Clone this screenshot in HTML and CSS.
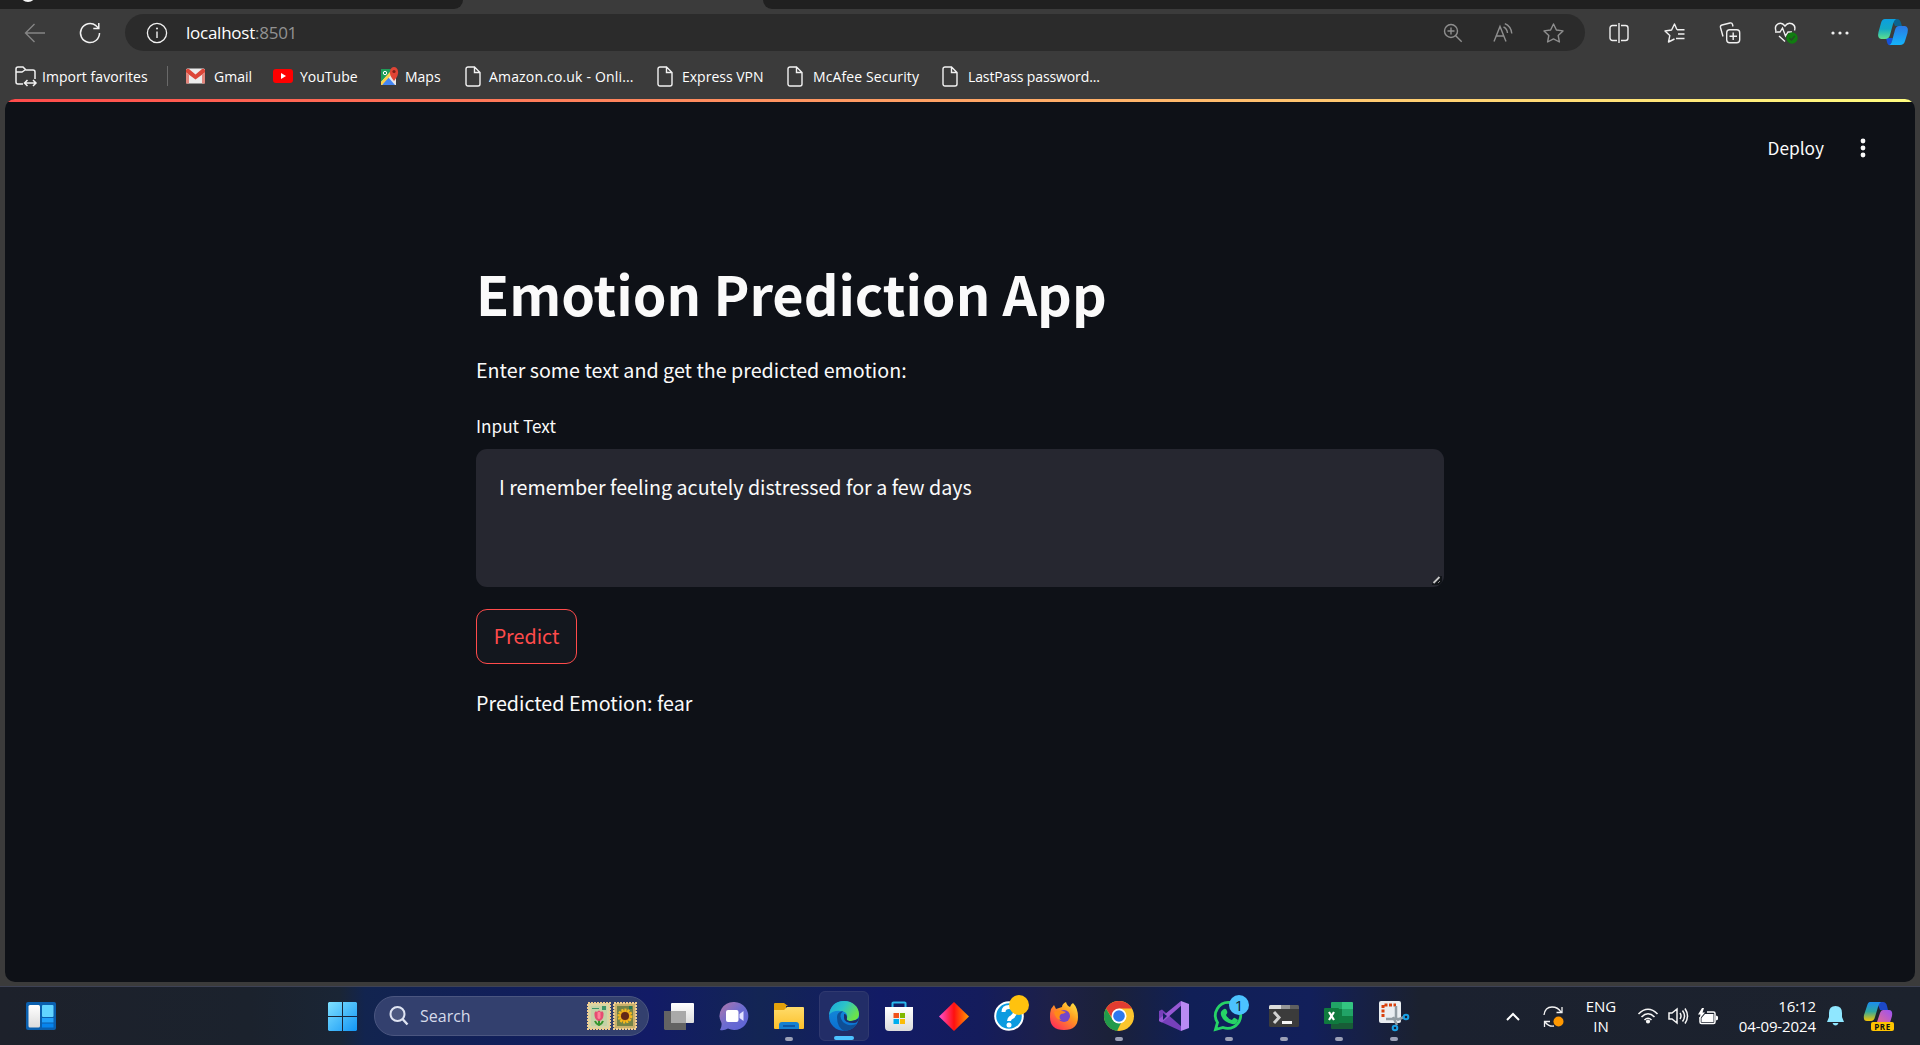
FILE: index.html
```html
<!DOCTYPE html>
<html lang="en">
<head>
<meta charset="utf-8">
<title>Emotion Prediction App</title>
<link rel="stylesheet" href="styles.css">
</head>
<body>
<svg class="defs" width="0" height="0">
  <defs>
    <linearGradient id="win" x1="0" y1="0" x2="1" y2="1"><stop offset="0" stop-color="#7fe0ff"/><stop offset="1" stop-color="#1296f5"/></linearGradient>
    <linearGradient id="edgeTop" x1="0" y1="0" x2="1" y2=".5"><stop offset="0" stop-color="#1aa5dc"/><stop offset=".5" stop-color="#2cc3c9"/><stop offset="1" stop-color="#6ae34a"/></linearGradient>
    <linearGradient id="edgeLow" x1="0" y1="0" x2="0" y2="1"><stop offset="0" stop-color="#1590dc"/><stop offset="1" stop-color="#0b6ed0"/></linearGradient>
    <linearGradient id="chat" x1="0" y1="0" x2="1" y2="1"><stop offset="0" stop-color="#b377a8"/><stop offset=".5" stop-color="#6c6cd0"/><stop offset="1" stop-color="#5a62d8"/></linearGradient>
    <linearGradient id="folder" x1="0" y1="0" x2="0" y2="1"><stop offset="0" stop-color="#ffdc6b"/><stop offset="1" stop-color="#fcc02a"/></linearGradient>
    <linearGradient id="gem" x1="0" y1="0" x2="1" y2="0"><stop offset="0" stop-color="#ff4fd0"/><stop offset=".5" stop-color="#ff1010"/><stop offset="1" stop-color="#ff9c00"/></linearGradient>
    <linearGradient id="fox" x1="1" y1="0" x2=".2" y2="1"><stop offset="0" stop-color="#fff04a"/><stop offset=".45" stop-color="#ff9a1f"/><stop offset="1" stop-color="#ff2a5a"/></linearGradient>
    <linearGradient id="copA" x1="0" y1="0" x2="0" y2="1"><stop offset="0" stop-color="#0c9fe0"/><stop offset=".5" stop-color="#13a9c5"/><stop offset="1" stop-color="#5ee08c"/></linearGradient>
    <linearGradient id="copB" x1="0" y1="0" x2="0" y2="1"><stop offset="0" stop-color="#2b78e4"/><stop offset="1" stop-color="#14b4fa"/></linearGradient>
    <linearGradient id="preA" x1="0" y1="0" x2="0" y2="1"><stop offset="0" stop-color="#1b8cf0"/><stop offset=".5" stop-color="#2fa7a0"/><stop offset="1" stop-color="#f5c400"/></linearGradient>
    <linearGradient id="preB" x1="1" y1="0" x2="0" y2="1"><stop offset="0" stop-color="#9a52f5"/><stop offset="1" stop-color="#f5707c"/></linearGradient>
    <linearGradient id="sheet" x1="0" y1="0" x2="0" y2="1"><stop offset="0" stop-color="#fff"/><stop offset="1" stop-color="#dcdcdc"/></linearGradient>
    <symbol id="page" viewBox="0 0 16 21"><path d="M3 1h6.500L15 6.500V18a2 2 0 0 1-2 2H3a2 2 0 0 1-2-2V3a2 2 0 0 1 2-2zM9.500 1v5.500H15" fill="none" stroke="#f2f2f2" stroke-width="1.400"/></symbol>
  </defs>
</svg>

<header class="browser">
  <div class="tabstrip">
    <div class="tabs-before"><span class="favicon"></span></div>
    <div class="tabs-after"></div>
  </div>
  <nav class="toolbar">
    <svg class="back" width="22" height="20" viewBox="0 0 22 20"><path d="M21 10H1.500M10.500 1 1.500 10l9 9" fill="none" stroke="#858585" stroke-width="1.400"/></svg>
    <svg class="reload" width="22" height="22" viewBox="0 0 22 22"><path d="M20.500 11A9.500 9.500 0 1 1 17 3.700L19.500 6M19.800 1v5.500h-5.500" fill="none" stroke="#f2f2f2" stroke-width="1.500"/></svg>
    <div class="address">
      <svg width="22" height="22" viewBox="0 0 22 22"><circle cx="11" cy="11" r="9.600" fill="none" stroke="#f2f2f2" stroke-width="1.300"/><path d="M11 9.500V16" stroke="#f2f2f2" stroke-width="1.400"/><circle cx="11" cy="6.500" r="1" fill="#f2f2f2"/></svg>
      <span class="url">localhost<span class="port">:8501</span></span>
      <div class="address-actions">
        <svg width="20" height="20" viewBox="0 0 20 20" fill="none" stroke="#8f8f8f" stroke-width="1.400"><circle cx="8" cy="8" r="6.500"/><path d="m12.700 12.700 6 6M8 4.500v7M4.500 8h7"/></svg>
        <svg width="20" height="20" viewBox="0 0 20 20" fill="none" stroke="#8f8f8f" stroke-width="1.400"><path d="m1 18.500 6-15 6 15M3.200 13h7.600M10.500 4q3.500 1.500 4 6M11.800.700Q18 3 18.800 10.500"/></svg>
        <svg width="21" height="20" viewBox="0 0 21 20"><path d="m10.500 1 2.900 6 6.600.900-4.800 4.600 1.200 6.500-5.900-3.100-5.900 3.100 1.200-6.500L1 7.900 7.600 7z" fill="none" stroke="#8f8f8f" stroke-width="1.400" stroke-linejoin="round"/></svg>
      </div>
    </div>
    <div class="tools">
      <svg width="20" height="20" viewBox="0 0 20 20" fill="none" stroke="#f0f0f0" stroke-width="1.400"><path d="M8 2.500H3.500a2.500 2.500 0 0 0-2.500 2.500v10a2.500 2.500 0 0 0 2.500 2.500H8M12 2.500h4.500A2.500 2.500 0 0 1 19 5v10a2.500 2.500 0 0 1-2.500 2.500H12M10 0v20"/></svg>
      <svg width="21" height="20" viewBox="0 0 21 20" fill="none" stroke="#f0f0f0" stroke-width="1.400" stroke-linejoin="round"><path d="M13 6.800 10.500 1 7.600 7 1 8l4.800 4.600L4.500 19l6-3M13 6.800h7.500M14 11h6.500M12 15.500h8.500"/></svg>
      <svg width="22" height="22" viewBox="0 0 22 22" fill="none" stroke="#f0f0f0" stroke-width="1.400"><rect x="7.700" y="7.700" width="13" height="13" rx="3"/><path d="M14.200 10.500v7.500M10.500 14.200H18M4 14.500 1.500 5.500Q1 3.500 3 3l8-2q2-.500 2.500 1.500l.500 2"/></svg>
      <svg width="24" height="22" viewBox="0 0 24 22" fill="none" stroke="#f0f0f0" stroke-width="1.400"><path d="M2 9C-.500 2 7-1.500 11 4c4-5.500 11.500-2 9.500 4.500M1 10h5l2.500-4 3 8 2.500-4h4M5 14l6 5.500"/><circle cx="18" cy="16" r="5.700" fill="#107c10" stroke="none"/><path d="m15.500 16 2 2 3.300-4" stroke="#264b26"/></svg>
      <svg width="20" height="6" viewBox="0 0 20 6" fill="#f0f0f0"><circle cx="3" cy="3" r="1.600"/><circle cx="10" cy="3" r="1.600"/><circle cx="17" cy="3" r="1.600"/></svg>
      <svg class="copilot-button" width="32" height="28" viewBox="0 0 32 28"><path d="M15 1h5q3 0 4 4l1 3h-7z" fill="#0a6390"/><path d="M9 20h7l3-12-5 19q-3 1-4-3z" fill="#1551d8"/><path d="M8 1h11q-2 1-3 5l-3 11q-1 4-5 4H4Q0 20 1.500 14L4 5Q5 1 8 1z" fill="url(#copA)"/><path d="M22 8h6q4 1 2.500 7L28 23q-1 4-5 4H12q2 0 3-4l3-11q1-4 4-4z" fill="url(#copB)"/></svg>
    </div>
  </nav>
  <nav class="bookmarks">
    <svg width="22" height="21" viewBox="0 0 22 21" fill="none" stroke="#f2f2f2" stroke-width="1.500"><path d="M8 18H3a2 2 0 0 1-2-2V3a2 2 0 0 1 2-2h5l3 3h7a2 2 0 0 1 2 2v7M1 6h6l3-2M10 17h10M12.500 14l-3 3 3 3M18 14l3 3-3 3"/></svg>
    <span class="b-import">Import favorites</span>
    <i class="divider"></i>
    <svg width="19" height="16" viewBox="0 0 19 15"><rect width="19" height="15" rx="1.500" fill="#ececec"/><path d="M0 1.500Q1-.500 3 .500L9.500 6 16 .500q2-1 3 1V4L9.500 11 0 4z" fill="#dc4638"/><path d="M0 4v11h3V6zM19 4v11h-3V6z" fill="#e2857c"/></svg>
    <span class="b-gmail">Gmail</span>
    <svg width="20" height="14" viewBox="0 0 20 14"><rect width="20" height="14" rx="3" fill="#f00"/><path d="m8 4 5 3-5 3z" fill="#fff"/></svg>
    <span class="b-yt">YouTube</span>
    <svg width="19" height="19" viewBox="0 0 19 19"><rect x="1" y="2" width="15" height="16" fill="#e8e8e8"/><path d="M1 2h12L1 15z" fill="#1e9c58"/><path d="m2 18 6-8 7 8z" fill="#4386f5"/><path d="m1 15 9-10 2 2-10 11H1z" fill="#fbd04b"/><path d="M14 14Q9 8 10 4q1-4 4-4t4 4q1 4-4 10" fill="#e04435"/><circle cx="14" cy="4.500" r="1.600" fill="#7d2018"/><circle cx="5" cy="6" r="1.700" fill="none" stroke="#fff"/></svg>
    <span class="b-maps">Maps</span>
    <svg width="16" height="21"><use href="#page"/></svg>
    <span class="b-amazon">Amazon.co.uk - Onli...</span>
    <svg width="16" height="21"><use href="#page"/></svg>
    <span class="b-vpn">Express VPN</span>
    <svg width="16" height="21"><use href="#page"/></svg>
    <span class="b-mcafee">McAfee Security</span>
    <svg width="16" height="21"><use href="#page"/></svg>
    <span class="b-lastpass">LastPass password...</span>
  </nav>
</header>

<main class="app">
  <div class="rainbow"></div>
  <div class="app-header">
    <span class="deploy">Deploy</span>
    <svg width="6" height="20" viewBox="0 0 6 20" fill="#fafafa"><circle cx="3" cy="3" r="2.400"/><circle cx="3" cy="10" r="2.400"/><circle cx="3" cy="17" r="2.400"/></svg>
  </div>
  <section class="content">
    <h1>Emotion Prediction App</h1>
    <p class="intro">Enter some text and get the predicted emotion:</p>
    <div class="label">Input Text</div>
    <div class="textarea">
      <span class="value">I remember feeling acutely distressed for a few days</span>
      <svg class="grip" width="11" height="10" viewBox="0 0 11 10"><path d="M1 8.500 8.500 1H11v6L8 10H1z" fill="#111418"/><path d="m2.500 8 6-6" stroke="#c8c8c8" stroke-width="1.800"/><path d="m7 8 2-2" stroke="#888"/></svg>
    </div>
    <button class="predict">Predict</button>
    <p class="result">Predicted Emotion: fear</p>
  </section>
</main>

<footer class="taskbar">
  <svg class="widgets" width="30" height="28" viewBox="0 0 30 28"><rect width="30" height="28" rx="2" fill="#0a5fae"/><rect x="2.500" y="3" width="11.500" height="22.500" rx="1.500" fill="url(#sheet)"/><rect x="16" y="3" width="11.500" height="12" rx="1" fill="#62d4ff"/><path d="M16 16h11.500v4.500H16z" fill="#20a0fa"/><path d="M16 21.500h11.500v4H16z" fill="#0684ee"/></svg>
  <svg class="start" width="29" height="29" viewBox="0 0 29 29" fill="url(#win)"><path d="M1 0h13v14H0V1zM15 0h13l1 1v13H15zM0 15h14v14H1l-1-1zM15 15h14v13l-1 1H15z"/></svg>
  <div class="search">
    <svg width="20" height="20" viewBox="0 0 20 20" fill="none" stroke="#dfe4f2" stroke-width="2"><circle cx="8.500" cy="8" r="7" fill="#ffffff20"/><path d="m13.500 13 5 5.500" stroke-width="2.400"/></svg>
    <span class="search-text">Search</span>
    <svg width="50" height="28" viewBox="0 0 50 28"><rect x="1" y="1" width="22" height="26" fill="#d8d4a4" stroke="#f1ce91" stroke-width="2" stroke-dasharray="2 1"/><path d="M4 4h16v20H4z" fill="#c3d2a6"/><path d="M15 4h4v4h-4zM5 6h7v1H5z" fill="#3d9568"/><path d="M12 17v7M12 23q-3-1-4-4M12 23q3-1 4-4" stroke="#35932d" stroke-width="2" fill="none"/><path d="M7.500 11q1-3 2.500-1 2-3 4 0 1.500-2 2.500 1 .500 7-4.500 8-5-1-4.500-8" fill="#e64c72"/><path d="M10.500 10.500q1.500-1.500 3 0V16q-1.500 2-3 0z" fill="#ff8299"/><rect x="27" y="1" width="22" height="26" fill="#c9b06b" stroke="#f1ce91" stroke-width="2" stroke-dasharray="2 1"/><path d="M30 4h16v20H30z" fill="#738348"/><circle cx="38" cy="14" r="6" fill="#e69c15" stroke="#f4ba20" stroke-width="3" stroke-dasharray="2 1"/><circle cx="38" cy="14" r="4" fill="#632717"/><path d="M42 4h3v3h-3z" fill="#267a54"/></svg>
  </div>
  <div class="apps">
    <div class="slot"><svg width="30" height="30" viewBox="0 0 30 30"><rect x="7" y="2" width="23" height="20" rx="1" fill="url(#sheet)"/><path d="M0 10h22v19H1l-1-1z" fill="#636363"/><path d="M7 10h15v12H7z" fill="#a9a9a9"/></svg></div>
    <div class="slot"><svg width="30" height="30" viewBox="0 0 30 30"><path d="M15.500 1a14 14 0 1 1-6.500 26.500Q5 30 1 29q2-3 1.500-7A14 14 0 0 1 15.500 1" fill="url(#chat)"/><rect x="7" y="9" width="12.500" height="12" rx="2" fill="#fff"/><path d="m20.500 13 4-3v10l-4-3z" fill="#e3e3ff"/></svg></div>
    <div class="slot running"><svg width="30" height="30" viewBox="0 0 30 30"><path d="M0 3q0-1 1-1h9l4 3h-2v7H0z" fill="#e3a10c"/><path d="M0 9h10l3-3h16q1 0 1 1v20q0 1-1 1H1q-1 0-1-1z" fill="url(#folder)"/><path d="M5 28v-4q0-3 3-3h14q3 0 3 3v4z" fill="#1780d0"/><path d="M9 25h12" stroke="#0b4a98" stroke-width="1.500"/></svg></div>
    <div class="slot active"><svg width="30" height="30" viewBox="0 0 30 30"><circle cx="15" cy="15" r="15" fill="url(#edgeLow)"/><path d="M0 14Q2 0 15 0c9 0 15 6 15 13 0 5-4 7-8 7-3 0-5-1-4-3 1-4-2-7-6-7Q4 9 0 14" fill="url(#edgeTop)"/><path d="M8 16q0-5 6-6-5 5 0 11 5 5 14 2-5 7-13 7-7-4-7-14" fill="#0f4f96"/><path d="M15 13q3 0 3 4-1 3 4 3 4 0 8-3-1 5-5 5-10 0-10-5z" fill="#1d2d68"/></svg></div>
    <div class="slot"><svg width="30" height="30" viewBox="0 0 30 30"><path d="M8.500 7V2q0-.500 1-.500h11q1 0 1 .500v5" fill="none" stroke="#2bb8ec" stroke-width="2"/><path d="M1 6h28v20q0 4-4 4H5q-4 0-4-4z" fill="url(#sheet)"/><path d="M9.500 12H15v5H9.500z" fill="#f1511b"/><path d="M16 12h5v5h-5z" fill="#80b800"/><path d="M9.500 18H15v5H9.500z" fill="#00adef"/><path d="M16 18h5v5h-5z" fill="#fbbc09"/></svg></div>
    <div class="slot"><svg width="30" height="30" viewBox="0 0 30 30"><path d="m15 1 15 14.500L15 30 0 15.500z" fill="url(#gem)"/></svg></div>
    <div class="slot"><svg width="30" height="30" viewBox="0 0 30 30"><circle cx="15" cy="15" r="13.800" fill="#0c9be0" stroke="#fff" stroke-width="2"/><path d="M9.500 11q0-5 5.500-5t6 5q0 3-3 5-3 1.500-3 4" fill="none" stroke="#fff" stroke-width="4"/><circle cx="15" cy="24" r="2.500" fill="#fff"/></svg><i class="dot-badge"></i></div>
    <div class="slot"><svg width="30" height="30" viewBox="0 0 30 30"><path d="M2 8l3-4 2 4 6-2q0-3 4-5 1 4 4 5 1-3 3-4 5 5 5 14 0 13-14 13Q1 29 1 16q0-5 1-8" fill="url(#fox)"/><circle cx="15" cy="15" r="6" fill="#7446c9"/><path d="M5 11q5-3 12 0-2 2-5 2-3 3 0 6-6-1-7-8" fill="#ff8a18"/></svg></div>
    <div class="slot running"><svg width="30" height="30" viewBox="0 0 30 30"><circle cx="15" cy="15" r="15" fill="#fcc52d"/><path d="M2 7.500A15 15 0 0 1 28 7.500H15L9 18.500z" fill="#e23c31"/><path d="M2 7.500 8.500 18.500Q12 22.500 17 22L13 30A15 15 0 0 1 2 7.500" fill="#219a4b"/><circle cx="15" cy="15" r="7.500" fill="#fff"/><circle cx="15" cy="15" r="5.800" fill="#2d78ee"/></svg></div>
    <div class="slot"><svg width="30" height="30" viewBox="0 0 30 30"><path d="m0 10 3-1.500L23 26l-1 4L0 20z" fill="#7740bb"/><path d="m0 20 3 1.500L23 4l-1-4L0 18z" fill="#9658d4"/><path d="m22 0 8 3v24l-8 3z" fill="#b98af3"/><path d="m4 12 4 3-4 4z" fill="#12205f"/></svg></div>
    <div class="slot running"><svg width="30" height="30" viewBox="0 0 30 30"><path d="M15.500 1.500a13 13 0 1 1-6.500 25L1.500 28.500l2-7a13 13 0 0 1 12-20z" fill="#10205c" stroke="#26d366" stroke-width="2.800"/><path d="M10 8q2-1 3 2 1 2-1 4 2 4 6 5 2-3 3-2l3 2q-1 5-6 4-9-2-11-9-1-4 3-6" fill="#26d366"/></svg><i class="count-badge">1</i></div>
    <div class="slot running"><svg width="30" height="30" viewBox="0 0 30 30"><rect y="4" width="30" height="22" rx="1.500" fill="#3b3b3b"/><path d="M0 8V5.500Q0 4 1.500 4H12v4z" fill="#dcdcdc"/><path d="M12 4h9v4h-9z" fill="#969696"/><path d="M21 4h7.500Q30 4 30 5.500V8h-9z" fill="#606060"/><path d="m5 11 5 5.500L5 22" fill="none" stroke="#d2d2d2" stroke-width="3"/><path d="M13 20h10v3H13z" fill="#f5f5f5"/></svg></div>
    <div class="slot running"><svg width="30" height="30" viewBox="0 0 30 30"><path d="M8 1h11v7H7V2q0-1 1-1" fill="#21a366"/><path d="M18 1h10q1 0 1 1v6H18z" fill="#33c481"/><path d="M7 8h11v14H7z" fill="#107c41"/><path d="M18 8h11v7H18z" fill="#21a366"/><path d="M18 15h11v7H18z" fill="#107c41"/><path d="M7 22h22v5q0 1-1 1H8q-1 0-1-1z" fill="#185c37"/><rect y="7" width="15" height="16" rx="1" fill="#0f7a3e"/><path d="m5 11 5 8M10 11l-5 8" stroke="#fff" stroke-width="2.200"/></svg></div>
    <div class="slot running"><svg width="30" height="30" viewBox="0 0 30 30"><rect width="22" height="22" rx="2" fill="#e9edf1"/><path d="M4 16V4h13" fill="none" stroke="#d9400d" stroke-width="3" stroke-dasharray="3 1.500"/><path d="M17 5v13M7 18h15M14 16l4 8M18 19l7-3" fill="none" stroke="#919ba2" stroke-width="2.500"/><g fill="none" stroke="#1aa1e6" stroke-width="2"><circle cx="16" cy="27" r="2.300"/><circle cx="27" cy="16" r="2.300"/></g></svg></div>
  </div>
  <div class="tray">
    <svg width="14" height="9" viewBox="0 0 14 9"><path d="m1 8 6-6 6 6" fill="none" stroke="#fff" stroke-width="2"/></svg>
    <svg width="21" height="22" viewBox="0 0 21 22"><path d="M1 10Q2 2 9 2q6 0 9 5M19 2v5.500h-5.500M7 16.500H1.500V22M2 17q4 5 9 4" fill="none" stroke="#f2f2f2" stroke-width="1.300"/><circle cx="15.500" cy="16.500" r="5" fill="#ff9800"/></svg>
    <div class="lang">ENG<br>IN</div>
    <svg width="20" height="16" viewBox="0 0 20 16" fill="none" stroke="#f5f5f5" stroke-width="1.600"><path d="M.500 6Q10-3.500 19.500 6M3.500 9Q10 2.500 16.500 9M6.500 12Q10 8.500 13.500 12"/><circle cx="10" cy="13.500" r="1.300" fill="#fff"/></svg>
    <svg width="20" height="18" viewBox="0 0 20 18" fill="none" stroke="#f5f5f5" stroke-width="1.500"><path d="M1 6h3l5-4v14l-5-4H1zM12 6q2 3 0 6M14.500 3.500q4 5.500 0 11M17 1.500q5 7.500 0 15"/></svg>
    <svg width="20" height="17" viewBox="0 0 20 17"><path d="M9 4h6.500Q17 4 17 5.500V14q0 1.500-1.500 1.500h-12Q2 15.500 2 14V9" fill="none" stroke="#fff" stroke-width="1.500"/><path d="M7 6h8.500v8h-12v-4zM18 7.500l2 1v3l-2 1zM4 0 0 6.500h2.500L1.500 11 7 4.500H4.500L6 0z" fill="#fff"/></svg>
    <div class="clock">16:12<br>04-09-2024</div>
    <svg width="17" height="20" viewBox="0 0 17 20"><path d="M8.500 0Q15 0 15 7v4l2 5H0l2-5V7q0-7 6.500-7M5.500 17h6q-1 2.500-3 2.500t-3-2.500" fill="#8fe7ff"/></svg>
    <div class="copilot"><svg width="30" height="28" viewBox="0 0 30 28"><path d="M13 0h6q3 0 4 4l1 4h-8z" fill="#1c48c8"/><path d="M6 0h11q-2 1-3 5l-3 10q-1 4-4 4H3q-4 0-3-6l3-9q1-4 3-4" fill="url(#preA)"/><path d="M19 8h6q4 0 3 6l-3 10H10q2 0 3-4l3-9q1-3 3-3" fill="url(#preB)"/></svg><i class="pre">PRE</i></div>
  </div>
</footer>
</body>
</html>
```
FILE: styles.css
```css
* { box-sizing: border-box; }
body {
  margin: 0;
  width: 1920px;
  height: 1045px;
  overflow: hidden;
  background: #3b3b3b;
  display: flex;
  flex-direction: column;
  font-family: "Open Sans", "Noto Sans", sans-serif;
  color: #fff;
}
svg { display: block; flex: none; overflow: visible; }
.defs { position: absolute; }
span { white-space: nowrap; }

/* Browser chrome */
.browser { height: 99px; flex: none; }
.tabstrip { height: 9px; display: flex; justify-content: space-between; }
.tabs-before { width: 463px; background: #202020; border-bottom-right-radius: 9px; padding-left: 20px; overflow: hidden; }
.favicon { display: block; width: 16px; height: 16px; margin-top: -14px; border-radius: 50%; background: #f5f5f5; }
.tabs-after { width: 1157px; background: #202020; border-bottom-left-radius: 9px; }
.toolbar { height: 47px; display: flex; align-items: center; }
.back { margin-left: 24px; }
.reload { margin-left: 33px; }
.address {
  width: 1460px;
  height: 37px;
  margin-left: 24px;
  padding: 0 21px 0 21px;
  border-radius: 19px;
  background: #2b2b2b;
  display: flex;
  align-items: center;
}
.url { margin-left: 18px; padding-bottom: 1px; font-size: 17px; letter-spacing: -0.25px; }
.port { color: #929292; }
.address-actions { margin-left: auto; display: flex; align-items: center; gap: 30px; }
.tools {
  display: grid;
  grid-template-columns: 56px 55px 56px 55px 53px 53px;
  justify-items: center;
  align-items: center;
  margin-left: 6px;
}
.copilot-button { margin-bottom: 2px; }
.bookmarks {
  height: 40px;
  padding-left: 15px;
  display: grid;
  grid-template-columns: 27px 125px 19px 28px 59px 27px 80px 25px 60px 24px 168px 25px 105px 26px 129px 26px 140px;
  align-items: center;
  font-size: 14px;
}
.divider { width: 1px; height: 20px; background: #696969; }
.b-import { letter-spacing: 0.05px; }
.b-amazon { letter-spacing: 0.17px; }
.b-mcafee { letter-spacing: 0.12px; }
.b-lastpass { letter-spacing: -0.12px; }

/* Web app */
.app {
  width: 1910px;
  height: 883px;
  flex: none;
  margin-left: 5px;
  border-radius: 10px;
  overflow: hidden;
  background: #0e1117;
  color: #fafafa;
  font-family: "Noto Sans CJK SC", "Open Sans", sans-serif;
}
.rainbow { height: 3px; background: linear-gradient(90deg, #ff4b4b, #fffd80); }
.app-header {
  height: 92px;
  padding-right: 49px;
  display: flex;
  justify-content: flex-end;
  align-items: center;
  gap: 36px;
}
.deploy { padding-bottom: 2px; font-size: 17.3px; }
.content { width: 968px; margin: 0 auto; padding-top: 66px; }
h1 { margin: 0; font-size: 54px; line-height: 66px; font-weight: 700; }
p { margin: 0; font-size: 19.7px; line-height: 36px; }
.intro { margin-top: 26px; }
.label { margin-top: 25px; font-size: 17.2px; line-height: 26px; }
.textarea {
  position: relative;
  height: 138px;
  margin-top: 10px;
  padding: 20px 23px;
  border-radius: 11px;
  background: #262730;
}
.value { display: block; font-size: 19.7px; line-height: 35px; }
.grip { position: absolute; right: 2px; bottom: 2px; }
.predict {
  display: block;
  width: 101px;
  height: 55px;
  margin-top: 22px;
  padding: 0 0 2px;
  border: 1px solid #ff4b4b;
  border-radius: 11px;
  background: #13171e;
  color: #ff4b4b;
  font: 19.7px "Noto Sans CJK SC", sans-serif;
}
.result { margin-top: 21px; }

/* Taskbar */
.taskbar {
  height: 59px;
  margin-top: auto;
  padding-left: 26px;
  border-top: 1px solid #3e4254;
  background: linear-gradient(90deg, #1d212b, #1b222d 250px, #1a2535 340px, #12244f 365px, #111f5a 500px, #121b66 650px, #132554 760px, #121b65 880px, #141c5c 980px, #1d2048 1050px, #1b2138 1110px, #101f57 1190px, #121f5a 1310px, #1b212f 1420px, #1c222d);
  display: flex;
  align-items: center;
}
.start { margin-left: 272px; }
.search {
  width: 275px;
  height: 40px;
  margin-left: 17px;
  padding: 0 11px 0 14px;
  border: 1px solid #4b5680;
  border-radius: 20px;
  background: #33406e;
  display: flex;
  align-items: center;
}
.search-text { margin-left: 11px; margin-right: auto; font-size: 16px; letter-spacing: 0; color: #d5daea; }
.apps { display: flex; margin-left: 5px; gap: 5px; }
.slot {
  position: relative;
  width: 50px;
  height: 50px;
  display: flex;
  align-items: center;
  justify-content: center;
}
.slot.active { border-radius: 6px; background: #222d67; border: 1px solid #30396f; }
.slot.running::after, .slot.active::after {
  content: "";
  position: absolute;
  bottom: 0;
  left: 21px;
  width: 8px;
  height: 4px;
  border-radius: 2px;
  background: #9ba0b6;
}
.slot.active::after { left: 14px; width: 20px; background: #4cc2ff; }
.dot-badge, .count-badge {
  position: absolute;
  top: 4px;
  left: 25px;
  width: 20px;
  height: 20px;
  border-radius: 50%;
  background: #ffc20e;
}
.count-badge { background: #4cc2ff; color: #10192c; font-size: 15px; font-style: normal; line-height: 20px; text-align: center; }
.tray {
  display: grid;
  grid-template-columns: 37px 28px 67px 30px 30px 32px 86px 37px 35px;
  align-items: center;
  margin-left: 87px;
  font-size: 15px;
  line-height: 20px;
}
.lang { width: 40px; margin-left: 10px; text-align: center; }
.clock { text-align: right; justify-self: end; white-space: nowrap; letter-spacing: -0.1px; }
.tray > :nth-child(8) { margin-left: 11px; }
.copilot { position: relative; width: 30px; margin-left: 11px; }
.pre {
  position: absolute;
  left: 7px;
  bottom: -1px;
  width: 23px;
  height: 9px;
  border-radius: 2px;
  background: #ffc400;
  color: #111;
  font: 700 8px/9px "Open Sans", sans-serif;
  letter-spacing: 0.5px;
  text-align: center;
}
```
